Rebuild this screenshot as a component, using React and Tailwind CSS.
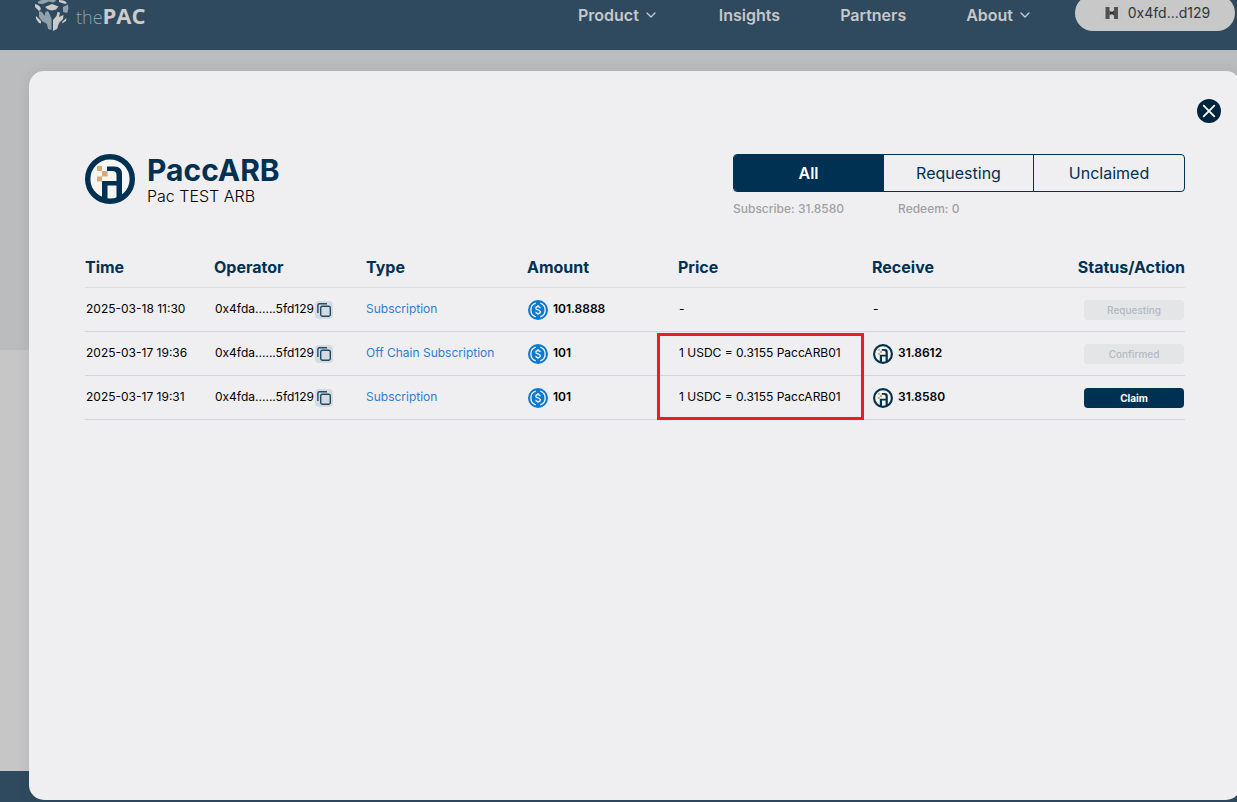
import React from "react";
import { ChevronDown } from "lucide-react";

function BrandMark() {
  return (
    <svg viewBox="0 0 36 34" className="h-[34px] w-9" aria-hidden="true">
      <g fill="#8ea1ad">
        <path d="M4 3.500 L12 0 L20 0 L22 3 L19 4.500 L15 3.500 L9 6 L4 5.500 Z" />
        <path d="M5 13 L8 14 L10.500 18 L11.500 14 L14 13 L16 17 L17.500 21 L17.500 32 L14 31 L13 26 L8 23 L5 19 Z" />
        <path d="M29 9 L34 6.500 Q35 12 33 15 L29 14 Z" />
      </g>
      <g fill="#cbcbcb">
        <path d="M11 9 L18 6 L24.500 8.500 L22 11.500 L18 12.500 L14 11.500 Z" />
        <path d="M25 2 Q31 2 33 5 L31 6 L25 4 Z" />
        <path d="M1 6 Q6 7 7 11 L5 13 L1 9 Z" />
        <path d="M2 18 L7 23 L7 25.500 L5 25 L2 21 Z" />
        <path d="M19 22 L22.500 18 L23.500 14 L26 14.500 L25 19 L29.500 17 L29 21 L25 25 L23 31 L19 33 Z" />
        <path d="M32.500 20 L32 23 L28 25.500 L28.500 23.500 Z" />
      </g>
    </svg>
  );
}

function PacIcon({ className }) {
  return (
    <svg viewBox="0 0 50 50" className={className} aria-hidden="true">
      <circle cx="25" cy="25" r="22.300" fill="#f5f5f4" stroke="#003152" strokeWidth="5.400" />
      <path
        d="M22 12.500 H29.500 Q37 12.500 37 20 V44 L31.500 46.500 V31.500 H22.500 V46 L17 44.500 V27 H31.500 V21 Q31.500 17 27.500 17 H22 Z"
        fill="#003152"
      />
      <g fill="#d3ae6c">
        <rect x="12" y="12" width="5" height="5" />
        <rect x="17" y="17" width="5.500" height="5.500" />
        <rect x="12" y="22.500" width="5" height="5" />
      </g>
    </svg>
  );
}

function UsdcIcon() {
  return (
    <svg viewBox="0 0 20 20" className="mt-0.5 size-5 shrink-0" fill="none" aria-hidden="true">
      <circle cx="10" cy="10" r="10" fill="#0b79d0" />
      <g stroke="#fff" strokeWidth="1.250">
        <path d="M7.700 3.200 A7.200 7.200 0 0 0 7.700 16.800" />
        <path d="M12.300 3.200 A7.200 7.200 0 0 1 12.300 16.800" />
        <path d="M12.300 8.100 C12.100 6.900 11.200 6.500 10 6.500 C8.700 6.500 7.800 7.100 7.800 8.200 C7.800 10.500 12.300 9.200 12.300 11.700 C12.300 12.900 11.300 13.500 10 13.500 C8.700 13.500 7.800 12.900 7.700 11.800 M10 5 V6.500 M10 13.500 V15" />
      </g>
    </svg>
  );
}

function CopyButton() {
  return (
    <button type="button" aria-label="Copy address" className="mt-0.5 grid size-[18px] shrink-0 place-items-center rounded bg-[#d5dbe0]">
      <svg viewBox="0 0 18 18" className="size-[18px]" fill="none" stroke="#1f4a68" strokeWidth="1.400" aria-hidden="true">
        <rect x="5.700" y="5.200" width="9.600" height="10" rx="1.600" />
        <path d="M2.900 12 V4.200 Q2.900 2.700 4.400 2.700 H12" />
      </svg>
    </button>
  );
}

const rows = [
  { time: "2025-03-18 11:30", type: "Subscription", amount: "101.8888", price: "-", receive: null, status: "Requesting" },
  { time: "2025-03-17 19:36", type: "Off Chain Subscription", amount: "101", price: "1 USDC = 0.3155 PaccARB01", receive: "31.8612", status: "Confirmed", marked: true },
  { time: "2025-03-17 19:31", type: "Subscription", amount: "101", price: "1 USDC = 0.3155 PaccARB01", receive: "31.8580", status: "Claim" },
];

const columns = [
  { label: "Time", style: "w-[129px]" },
  { label: "Operator", style: "w-[152px]" },
  { label: "Type", style: "w-[161px]" },
  { label: "Amount", style: "w-[151px]" },
  { label: "Price", style: "w-[194px]" },
  { label: "Receive", style: "" },
  { label: "Status/Action", style: "w-[120px] text-right" },
];

function SiteHeader() {
  return (
    <header className="flex h-[50px] items-start justify-between bg-[#2f4a5e] pr-0.5 pl-[34px] text-[#c6c8ca]">
      <a href="#home" className="flex h-[30px] items-center gap-1.5 font-['Open_Sans',sans-serif]">
        <BrandMark />
        <span className="text-[22px] leading-[30px] font-bold text-[#cbcbcb]">
          <span className="text-lg leading-6 font-light text-[#8ea1ad]">the</span>PAC
        </span>
      </a>
      <div className="flex items-start">
        <nav className="mr-[42px] flex h-[30px] items-center gap-[60px] text-base font-semibold">
          <a href="#product" className="flex items-center gap-1">Product <ChevronDown size={16} /></a>
          <a href="#insights">Insights</a>
          <a href="#partners">Partners</a>
          <a href="#about" className="flex items-center gap-1">About <ChevronDown size={16} /></a>
        </nav>
        <button type="button" className="-mt-[5px] flex h-9 w-40 items-center justify-center gap-1.5 rounded-full bg-[#c8c8c8] pl-0.5 text-sm text-[#333638]">
          <svg viewBox="0 0 20 20" className="size-5" aria-hidden="true">
            <circle cx="10" cy="10" r="9.500" fill="#cacaca" stroke="#c1c1c1" />
            <path d="M3.500 4 H7.500 V16 H3.500 Z M12 4 H16 V16 H12 Z" fill="#505050" />
            <path d="M7.500 7.500 Q9.750 10 12 7.500 V12.500 Q9.750 10 7.500 12.500 Z" fill="#333" />
          </svg>
          0x4fd...d129
        </button>
      </div>
    </header>
  );
}

function TransactionTable() {
  return (
    <table className="mt-7 w-full table-fixed border-collapse text-left text-xs text-black">
      <thead>
        <tr className="h-[41px] border-b border-[#dedfe1] text-base text-[#003152]">
          {columns.map((c) => (
            <th key={c.label} scope="col" className={`${c.style} p-0 pt-0.5 font-bold`}>{c.label}</th>
          ))}
        </tr>
      </thead>
      <tbody>
        {rows.map((r) => (
          <tr key={r.time} className="h-11 border-b border-[#d3d5d8] whitespace-nowrap">
            <td className="p-0 pl-px">{r.time}</td>
            <td className="p-0 pl-px">
              <div className="flex items-center gap-px">0x4fda......5fd129 <CopyButton /></div>
            </td>
            <td className="p-0"><a href="#type" className="text-[#2f7dd1]">{r.type}</a></td>
            <td className="p-0 pl-px font-semibold">
              <div className="flex items-center gap-[5px]"><UsdcIcon />{r.amount}</div>
            </td>
            <td className="relative p-0 pl-px">
              {r.price}
              {r.marked && <span className="pointer-events-none absolute top-px -left-[21px] h-[87px] w-[207px] border-3 border-[#ed1c24]" />}
            </td>
            <td className="p-0 pl-px">
              {r.receive ? (
                <div className="flex items-center gap-[5px] font-semibold"><PacIcon className="mt-0.5 size-5 shrink-0" />{r.receive}</div>
              ) : "-"}
            </td>
            <td className="p-0 pt-0.5 pr-px">
              <button
                type="button"
                disabled={r.status !== "Claim"}
                className={`ml-auto block h-5 w-[100px] rounded text-[10px] leading-5 ${r.status === "Claim" ? "bg-[#003152] font-bold text-white" : "bg-[#e4e5e7] font-medium text-[#b2bac3]"}`}
              >
                {r.status}
              </button>
            </td>
          </tr>
        ))}
      </tbody>
    </table>
  );
}

function HistoryDialog() {
  return (
    <section role="dialog" aria-labelledby="fund-name" className="relative -mr-1 flex-1 rounded-[15px] bg-[#efeff1] px-14 pt-[83px] shadow-[0_0_14px_rgba(0,0,0,0.08)]">
      <button type="button" aria-label="Close" className="absolute top-7 right-5 grid size-6 place-items-center rounded-full bg-[#00253f]">
        <svg viewBox="0 0 24 24" className="size-6" stroke="#fff" strokeWidth="1.800" strokeLinecap="round" aria-hidden="true">
          <path d="M6.700 6.700 L17.300 17.300 M17.300 6.700 L6.700 17.300" />
        </svg>
      </button>
      <div className="flex items-start justify-between">
        <div className="flex items-start gap-3">
          <PacIcon className="size-[50px] shrink-0" />
          <div>
            <h1 id="fund-name" className="text-3xl leading-8 font-bold text-[#003152]">PaccARB</h1>
            <p className="text-base leading-5 font-light text-black">Pac TEST ARB</p>
          </div>
        </div>
        <div className="w-[452px]">
          <div className="grid h-[38px] grid-cols-3 divide-x divide-[#003152] overflow-hidden rounded border border-[#003152] text-base text-[#003152]">
            <button type="button" className="bg-[#003152] font-semibold text-white">All</button>
            <button type="button">Requesting</button>
            <button type="button">Unclaimed</button>
          </div>
          <div className="mt-2 flex gap-[54px] text-xs leading-[18px] font-medium text-[#a0a1a4]">
            <span>Subscribe: 31.8580</span>
            <span>Redeem: 0</span>
          </div>
        </div>
      </div>
      <TransactionTable />
    </section>
  );
}

export default function App() {
  return (
    <div className="relative flex min-h-screen flex-col overflow-hidden bg-[#c6c6c6] font-[Inter,sans-serif]">
      <SiteHeader />
      <div className="h-[300px] bg-[#bbbcbe]" />
      <div className="flex-1" />
      <footer className="h-[31px] bg-[#2f4a5e]" />
      <div className="absolute inset-0 flex pt-[71px] pb-0.5 pl-[29px]">
        <HistoryDialog />
      </div>
    </div>
  );
}
